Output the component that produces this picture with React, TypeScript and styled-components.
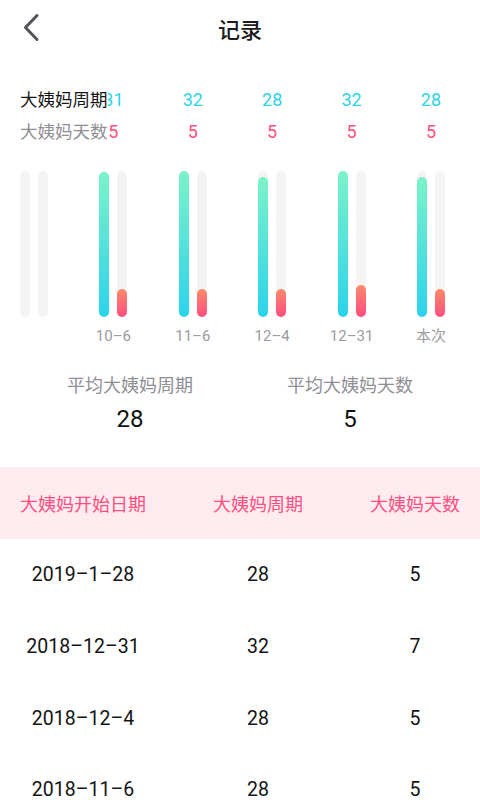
import styled, { createGlobalStyle } from "styled-components";

const GlobalStyle = createGlobalStyle`
  body {
    margin: 0;
    background: #fff;
    font-family: "Roboto", "Noto Sans CJK SC", sans-serif;
  }
`;

interface Period {
  label: string;
  cycle?: number;
  days?: number;
  cycleH: number;
  daysH: number;
}

const periods: Period[] = [
  { label: "", cycleH: 0, daysH: 0 },
  { label: "10–6", cycle: 31, days: 5, cycleH: 145, daysH: 28 },
  { label: "11–6", cycle: 32, days: 5, cycleH: 146, daysH: 28 },
  { label: "12–4", cycle: 28, days: 5, cycleH: 140, daysH: 28 },
  { label: "12–31", cycle: 32, days: 5, cycleH: 146, daysH: 32 },
  { label: "本次", cycle: 28, days: 5, cycleH: 140, daysH: 28 },
];

const records = [
  { date: "2019–1–28", cycle: 28, days: 5 },
  { date: "2018–12–31", cycle: 32, days: 7 },
  { date: "2018–12–4", cycle: 28, days: 5 },
  { date: "2018–11–6", cycle: 28, days: 5 },
];

const Page = styled.div`
  width: 480px;
  height: 800px;
  overflow: hidden;
  background: #fff;
`;

const Header = styled.header`
  position: relative;
  height: 56px;
  display: flex;
  align-items: center;
  justify-content: center;
`;

const Back = styled.svg`
  position: absolute;
  left: 18px;
  top: 10px;
`;

const Title = styled.h1`
  margin: 0;
  font-size: 22px;
  font-weight: 500;
  color: #1c1c1c;
`;

const Chart = styled.section`
  position: relative;
  margin-top: 28px;
  padding-left: 14px;
  display: grid;
  grid-template-columns: repeat(6, 40px);
  column-gap: 39.4px;
`;

// legend sits over the first value column, like the original
const Legend = styled.div`
  position: absolute;
  left: 0;
  top: 0;
  padding-left: 20px;
  width: 88px;
  background: #fff;
  z-index: 1;
`;

const LegendItem = styled.div<{ $muted?: boolean }>`
  height: 32px;
  line-height: 32px;
  font-size: 17.5px;
  color: ${(p) => (p.$muted ? "#8e8e94" : "#151515")};
  white-space: nowrap;
`;

const Column = styled.div`
  display: flex;
  flex-direction: column;
  align-items: center;
`;

const Value = styled.div<{ $color: string }>`
  height: 32px;
  line-height: 32px;
  font-size: 18px;
  color: ${(p) => p.$color};
`;

const Bars = styled.div`
  margin-top: 23px;
  height: 146px;
  display: flex;
  gap: 8px;
`;

const Track = styled.div`
  width: 10px;
  height: 100%;
  border-radius: 5px;
  background: #f4f4f4;
  display: flex;
  align-items: flex-end;
`;

const Fill = styled.div<{ $from: string; $to: string }>`
  width: 100%;
  border-radius: 5px;
  background: linear-gradient(${(p) => p.$from}, ${(p) => p.$to});
`;

const BarLabel = styled.div`
  margin-top: 9px;
  height: 20px;
  line-height: 20px;
  font-size: 15px;
  color: #9a9aa0;
  white-space: nowrap;
`;

const Averages = styled.section`
  margin-top: 27px;
  padding: 0 20px;
  display: grid;
  grid-template-columns: 1fr 1fr;
`;

const Average = styled.div`
  display: flex;
  flex-direction: column;
  align-items: center;
`;

const AverageLabel = styled.div`
  font-size: 18px;
  line-height: 26px;
  color: #8e8e94;
`;

const AverageValue = styled.div`
  margin-top: 4px;
  font-size: 24px;
  line-height: 32px;
  color: #111;
`;

const Table = styled.section`
  margin-top: 32px;
`;

const TableRow = styled.div<{ $head?: boolean }>`
  display: grid;
  grid-template-columns: 126px 90px 90px;
  justify-content: space-between;
  align-items: center;
  padding: 0 20px;
  height: ${(p) => (p.$head ? "72px" : "71.7px")};
  background: ${(p) => (p.$head ? "#ffebf0" : "transparent")};
  color: ${(p) => (p.$head ? "#ff4f7e" : "#141414")};
  font-size: ${(p) => (p.$head ? "18px" : "19.5px")};
`;

const Cell = styled.div`
  text-align: center;
  white-space: nowrap;
`;

const App = () => {
  return (
    <Page>
      <GlobalStyle />
      <Header>
        <Back width="28" height="36" viewBox="0 0 28 36">
          <polyline
            points="19,5.5 7.5,17.5 19,29.5"
            fill="none"
            stroke="#52525c"
            strokeWidth="3"
            strokeLinecap="round"
            strokeLinejoin="round"
          />
        </Back>
        <Title>记录</Title>
      </Header>

      <Chart>
        <Legend>
          <LegendItem>大姨妈周期</LegendItem>
          <LegendItem $muted>大姨妈天数</LegendItem>
        </Legend>
        {periods.map((p, i) => (
          <Column key={i}>
            <Value $color="#2fd2ea">{p.cycle ?? ""}</Value>
            <Value $color="#ff4f7e">{p.days ?? ""}</Value>
            <Bars>
              <Track>
                {p.cycleH > 0 && (
                  <Fill $from="#7cf2c9" $to="#2bd3ec" style={{ height: p.cycleH }} />
                )}
              </Track>
              <Track>
                {p.daysH > 0 && (
                  <Fill $from="#ff8a6c" $to="#ff4d80" style={{ height: p.daysH }} />
                )}
              </Track>
            </Bars>
            <BarLabel>{p.label || "\u00a0"}</BarLabel>
          </Column>
        ))}
      </Chart>

      <Averages>
        <Average>
          <AverageLabel>平均大姨妈周期</AverageLabel>
          <AverageValue>28</AverageValue>
        </Average>
        <Average>
          <AverageLabel>平均大姨妈天数</AverageLabel>
          <AverageValue>5</AverageValue>
        </Average>
      </Averages>

      <Table>
        <TableRow $head>
          <Cell>大姨妈开始日期</Cell>
          <Cell>大姨妈周期</Cell>
          <Cell>大姨妈天数</Cell>
        </TableRow>
        {records.map((r) => (
          <TableRow key={r.date}>
            <Cell>{r.date}</Cell>
            <Cell>{r.cycle}</Cell>
            <Cell>{r.days}</Cell>
          </TableRow>
        ))}
      </Table>
    </Page>
  );
};

export default App;
